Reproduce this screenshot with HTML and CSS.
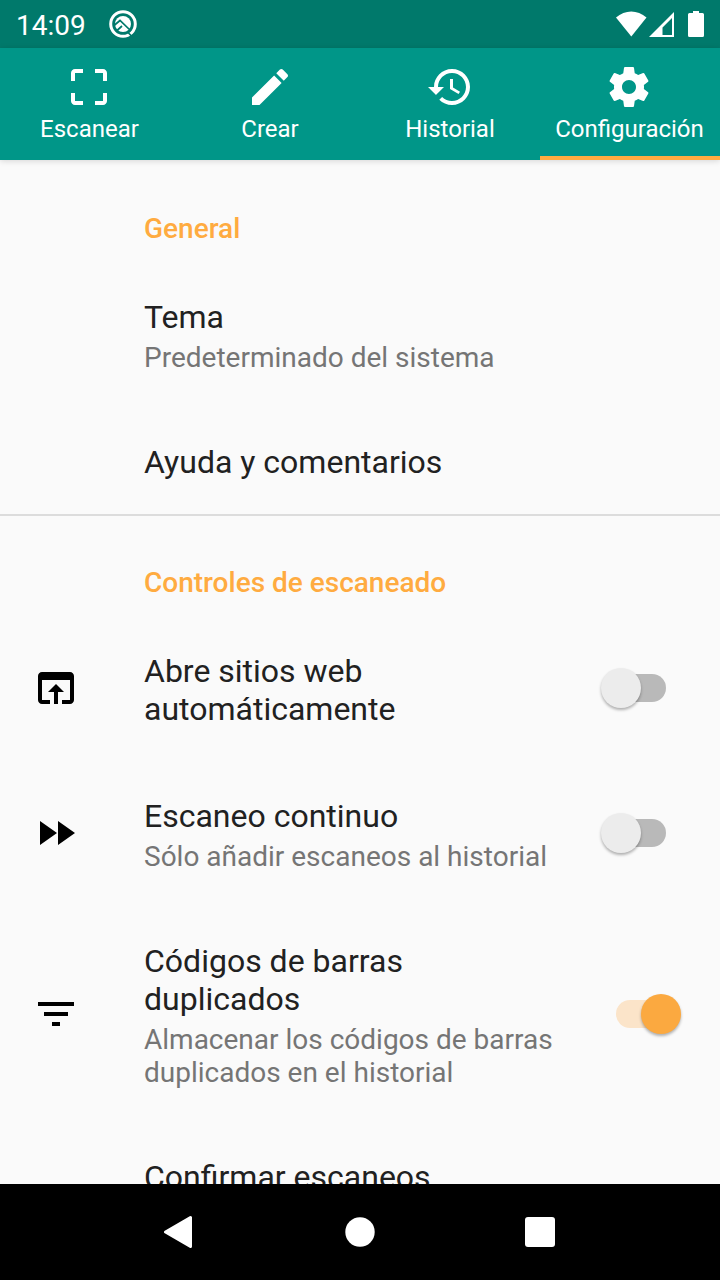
FILE: index.html
```html
<!DOCTYPE html>
<html lang="es">
<head>
    <meta charset="UTF-8">
    <meta name="viewport" content="width=device-width, initial-scale=1.0">
    <title>Configuración</title>
    <link rel="stylesheet" href="styles.css">
</head>
<body>
<div class="screen">
  <header class="status-bar">
    <span class="clock">14:09</span>
    <svg class="notif" viewBox="0 0 28 28">
      <circle cx="14" cy="14" r="12.300" fill="none" stroke="#fff" stroke-width="3"/>
      <circle cx="14" cy="14" r="8" fill="#fff"/>
      <path d="M5 15.500L11 10.500L22 21M8 20.500L13 16M19 22.500L24 27.500" fill="none" stroke="#00796b" stroke-width="1.700"/>
    </svg>
    <svg class="system" viewBox="0 0 92 32">
      <path d="M0 9.500C9 1.500 21.500 1.500 30.500 9.500L15.300 28.500Z" fill="#fff"/>
      <path d="M58 4V29H33Z M56 10L46.500 19.500V27H56Z" fill="#fff" fill-rule="evenodd"/>
      <path d="M77 3h6v2h3.500q1.500 0 1.500 1.500V27.500q0 1.500-1.500 1.500h-13q-1.500 0-1.500-1.500V6.500q0-1.500 1.500-1.500H77z" fill="#fff"/>
    </svg>
  </header>

  <nav class="tabs">
    <div class="tab shift">
      <svg viewBox="0 0 24 24"><path d="M3 5v4h2V5h4V3H5c-1.100 0-2 .9-2 2zm2 10H3v4c0 1.100.9 2 2 2h4v-2H5v-4zm14 4h-4v2h4c1.100 0 2-.9 2-2v-4h-2v4zm0-16h-4v2h4v4h2V5c0-1.100-.9-2-2-2z"/></svg>
      <span>Escanear</span>
    </div>
    <div class="tab">
      <svg viewBox="0 0 24 24"><path d="M3 17.250V21h3.750L17.810 9.940l-3.750-3.750L3 17.250zM20.710 7.040c.39-.39.39-1.020 0-1.410l-2.340-2.340c-.39-.39-1.020-.39-1.410 0l-1.830 1.830 3.750 3.750 1.830-1.830z"/></svg>
      <span>Crear</span>
    </div>
    <div class="tab">
      <svg viewBox="0 0 24 24"><path d="M13 3c-4.970 0-9 4.030-9 9H1l3.890 3.890.07.14L9 12H6c0-3.870 3.130-7 7-7s7 3.130 7 7-3.130 7-7 7c-1.930 0-3.680-.79-4.940-2.060l-1.420 1.420C8.270 19.990 10.510 21 13 21c4.970 0 9-4.030 9-9s-4.030-9-9-9zm-1 5v5l4.280 2.540.72-1.210-3.500-2.080V8H12z"/></svg>
      <span>Historial</span>
    </div>
    <div class="tab shift active">
      <svg viewBox="0 0 24 24"><path d="M19.430 12.980c.04-.32.07-.64.07-.98s-.03-.66-.07-.98l2.110-1.650c.19-.15.24-.42.12-.64l-2-3.460c-.12-.22-.39-.3-.61-.22l-2.490 1c-.52-.4-1.080-.73-1.690-.98l-.38-2.650C14.460 2.180 14.250 2 14 2h-4c-.25 0-.46.18-.49.42l-.38 2.650c-.61.25-1.170.59-1.690.98l-2.490-1c-.23-.09-.49 0-.61.22l-2 3.460c-.13.22-.07.49.12.64l2.110 1.650c-.04.32-.07.65-.07.98s.03.66.07.98l-2.110 1.650c-.19.15-.24.42-.12.64l2 3.460c.12.22.39.3.61.22l2.490-1c.52.4 1.080.73 1.690.98l.38 2.650c.03.24.24.42.49.42h4c.25 0 .46-.18.49-.42l.38-2.650c.61-.25 1.170-.59 1.690-.98l2.490 1c.23.09.49 0 .61-.22l2-3.460c.12-.22.07-.49-.12-.64l-2.110-1.650zM12 15.500c-1.930 0-3.500-1.570-3.500-3.500s1.570-3.500 3.500-3.500 3.500 1.570 3.500 3.500-1.570 3.500-3.500 3.500z"/></svg>
      <span>Configuración</span>
    </div>
  </nav>

  <main class="settings">
    <h2 class="category">General</h2>
    <div class="row">
      <div class="text">
        <div class="title">Tema</div>
        <div class="summary">Predeterminado del sistema</div>
      </div>
    </div>
    <div class="row">
      <div class="text">
        <div class="title">Ayuda y comentarios</div>
      </div>
    </div>

    <h2 class="category divided">Controles de escaneado</h2>
    <div class="row">
      <svg class="icon" viewBox="0 0 24 24"><path d="M19 4H5c-1.110 0-2 .9-2 2v12c0 1.100.89 2 2 2h4v-2H5V8h14v10h-4v2h4c1.100 0 2-.9 2-2V6c0-1.100-.89-2-2-2zm-7 6l-4 4h3v6h2v-6h3l-4-4z"/></svg>
      <div class="text">
        <div class="title">Abre sitios web automáticamente</div>
      </div>
      <div class="switch"></div>
    </div>
    <div class="row">
      <svg class="icon" viewBox="0 0 24 24"><path d="M4 18l8.500-6L4 6v12zm9-12v12l8.500-6L13 6z"/></svg>
      <div class="text">
        <div class="title">Escaneo continuo</div>
        <div class="summary">Sólo añadir escaneos al historial</div>
      </div>
      <div class="switch"></div>
    </div>
    <div class="row">
      <svg class="icon" viewBox="0 0 24 24"><path d="M10 18h4v-2h-4v2zM3 6v2h18V6H3zm3 7h12v-2H6v2z"/></svg>
      <div class="text">
        <div class="title">Códigos de barras duplicados</div>
        <div class="summary">Almacenar los códigos de barras duplicados en el historial</div>
      </div>
      <div class="switch on"></div>
    </div>
    <div class="row">
      <div class="text">
        <div class="title">Confirmar escaneos</div>
      </div>
    </div>
  </main>

  <footer class="nav-bar">
    <svg viewBox="0 0 32 34"><path d="M26.500 2.500V31.500L1.500 17Z" fill="#fff" stroke="#fff" stroke-width="3" stroke-linejoin="round"/></svg>
    <svg viewBox="0 0 32 34"><circle cx="16" cy="17" r="14.700" fill="#fff"/></svg>
    <svg viewBox="0 0 32 34"><rect x="1" y="2" width="30" height="30" rx="3" fill="#fff"/></svg>
  </footer>
</div>
</body>
</html>
```
FILE: styles.css
```css
body {
  margin: 0;
  font-family: Roboto, sans-serif;
  background-color: #fafafa;
}

.screen {
  display: flex;
  flex-direction: column;
  height: 1280px;
  width: 720px;
  overflow: hidden;
}

.status-bar {
  display: flex;
  align-items: center;
  flex: none;
  height: 48px;
  padding: 0 12px 0 16px;
  box-sizing: border-box;
  background-color: #00796b;
  color: white;
}

.clock {
  font-size: 28px;
  line-height: 48px;
  padding-top: 3px;
}

.notif {
  width: 28px;
  height: 28px;
  margin-left: 23px;
}

.system {
  width: 92px;
  height: 32px;
  margin-left: auto;
}

.tabs {
  display: grid;
  grid-template-columns: repeat(4, 1fr);
  flex: none;
  height: 112px;
  background-color: #009688;
  color: white;
  box-shadow: 0 1px 6px rgba(0, 0, 0, 0.15);
  z-index: 1;
}

.tab {
  display: flex;
  flex-direction: column;
  align-items: center;
  padding-top: 15px;
  font-size: 24px;
  line-height: 28px;
  white-space: nowrap;
}

.tab.shift {
  padding-right: 1px;
}

.tab svg {
  width: 48px;
  height: 48px;
  fill: white;
  margin-bottom: 4px;
}

.tab.shift svg {
  margin-right: 1px;
}

.tab.active {
  border-bottom: 4px solid #ffab40;
}

.settings {
  flex: 1;
  min-height: 0;
  overflow: hidden;
}

.category {
  box-sizing: border-box;
  height: 102px;
  margin: 0;
  padding: 52px 0 0 144px;
  font-size: 28px;
  line-height: 33px;
  font-weight: 500;
  color: #ffab40;
}

.category.divided {
  border-top: 2px solid #dcdcdc;
  padding-top: 50px;
}

.row {
  display: flex;
  align-items: center;
  padding: 32px 32px 32px 144px;
}

.icon {
  width: 48px;
  height: 48px;
  margin: 0 64px 1px -112px;
}

.text {
  width: 416px;
}

.title {
  font-size: 32px;
  line-height: 38px;
  padding: 4px 0 1px;
  color: #212121;
}

.summary {
  font-size: 28px;
  line-height: 33px;
  padding: 4px 0 1px;
  color: #757575;
}

.switch {
  position: relative;
  width: 52px;
  height: 28px;
  margin: 0 0 1px 54px;
  border-radius: 14px;
  background-color: #b9b9b9;
}

.switch::after {
  content: "";
  position: absolute;
  left: -13px;
  top: -6px;
  width: 40px;
  height: 40px;
  border-radius: 50%;
  background-color: #ececec;
  box-shadow: 0 2px 3px rgba(0, 0, 0, 0.3);
}

.switch.on {
  margin-left: 56px;
  margin-bottom: 0;
  background-color: #fbe4c9;
}

.switch.on::after {
  left: 25px;
  background-color: #fba940;
}

.nav-bar {
  display: flex;
  align-items: center;
  justify-content: space-between;
  flex: none;
  height: 96px;
  padding: 0 164px;
  background-color: black;
}

.nav-bar svg {
  width: 32px;
  height: 34px;
}
```
